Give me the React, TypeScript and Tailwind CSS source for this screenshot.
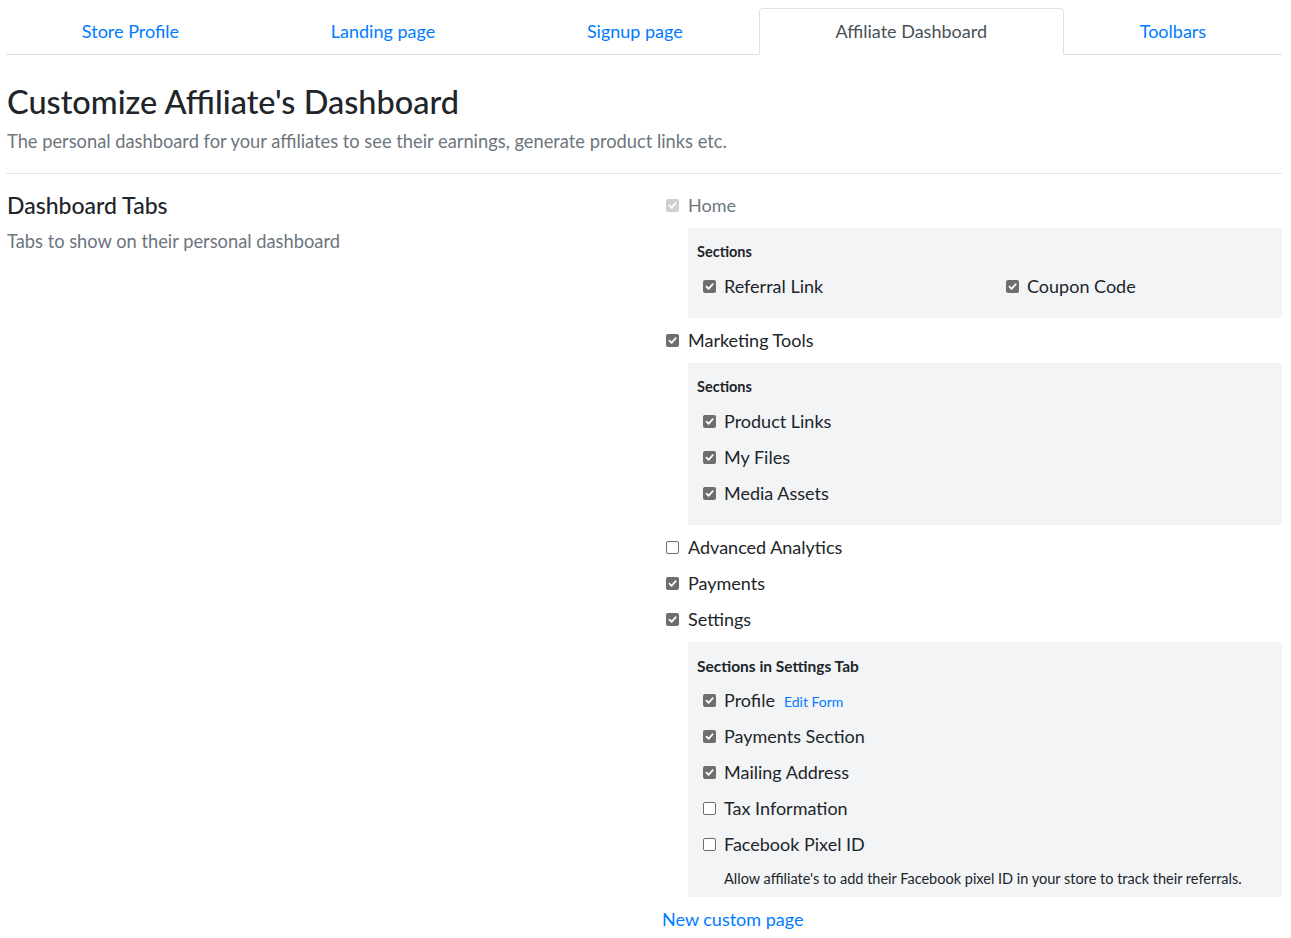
import React from "react";

const font = { fontFamily: "Lato, 'Noto Sans', sans-serif" };

function Box({ checked, disabled }: { checked: boolean; disabled?: boolean }) {
  if (checked) {
    return (
      <span
        className={`inline-flex h-[13px] w-[13px] shrink-0 items-center justify-center rounded-[2px] ${
          disabled ? "bg-[#d0d0d0]" : "bg-[#6e6e6e]"
        }`}
      >
        <svg width="9" height="9" viewBox="0 0 10 10" fill="none">
          <path d="M1.6 5.2 L4 7.6 L8.6 2.4" stroke="white" strokeWidth="1.9" strokeLinecap="round" strokeLinejoin="round" />
        </svg>
      </span>
    );
  }
  return <span className="inline-block h-[13px] w-[13px] shrink-0 rounded-[2px] border border-[#6e6e6e] bg-white" />;
}

function Check({
  label,
  checked,
  disabled,
  extra,
  gap = "gap-[9px]",
}: {
  label: string;
  checked: boolean;
  disabled?: boolean;
  extra?: React.ReactNode;
  gap?: string;
}) {
  return (
    <div className={`flex h-[36px] items-center ${gap}`}>
      <Box checked={checked} disabled={disabled} />
      <span className={`text-[18px] ${disabled ? "text-[#6c757d]" : "text-[#212529]"}`}>{label}</span>
      {extra}
    </div>
  );
}

function Panel({
  title,
  children,
  pb = "pb-[14px]",
  titleSize = "text-[14.5px]",
}: {
  title: string;
  children: React.ReactNode;
  pb?: string;
  titleSize?: string;
}) {
  return (
    <div className={`ml-[22px] mt-[5px] mb-[4px] bg-[#f3f4f6] pl-[9px] pr-[9px] pt-[14px] ${pb}`}>
      <div className={`h-[20px] font-bold leading-[20px] text-[#212529] ${titleSize}`}>{title}</div>
      <div className="mt-[6px] pl-[6px]">{children}</div>
    </div>
  );
}

export default function App() {
  const tabs = ["Store Profile", "Landing page", "Signup page", "Affiliate Dashboard", "Toolbars"];
  return (
    <div style={font} className="min-h-[938px] bg-white text-[#212529]">
      <div className="ml-[6px] w-[1276px]">
        {/* Tabs */}
        <div className="flex pt-[8px] border-b border-[#dee2e6]">
          {tabs.map((t) =>
            t === "Affiliate Dashboard" ? (
              <div
                key={t}
                className="-mb-px flex h-[47px] flex-auto items-center justify-center rounded-t-[4px] border border-[#dee2e6] border-b-white bg-white text-[18px] text-[#495057]"
              >
                {t}
              </div>
            ) : (
              <div key={t} className="flex h-[46px] flex-auto items-center justify-center text-[18px] text-[#007bff]">
                {t}
              </div>
            )
          )}
        </div>

        {/* Header */}
        <div className="pl-[1px]">
          <h1 className="mt-[27px] text-[32.5px] font-medium leading-[40px] text-[#212529]">Customize Affiliate's Dashboard</h1>
          <p className="mt-[7px] text-[18.3px] leading-[24px] text-[#6c757d]">
            The personal dashboard for your affiliates to see their earnings, generate product links etc.
          </p>
        </div>
        <div className="mt-[20px] border-t border-[#e2e4e7]" />

        {/* Body */}
        <div className="grid grid-cols-[660px_616px] pt-[13px]">
          <div className="pl-[1px]">
            <h2 className="h-[36px] text-[23px] font-medium leading-[36px] text-[#212529]">Dashboard Tabs</h2>
            <p className="mt-[1px] text-[18.3px] leading-[34px] text-[#6c757d]">Tabs to show on their personal dashboard</p>
          </div>
          <div>
            <Check label="Home" checked disabled />
            <Panel title="Sections">
              <div className="grid grid-cols-[303px_1fr]">
                <Check label="Referral Link" checked gap="gap-[8px]" />
                <Check label="Coupon Code" checked gap="gap-[8px]" />
              </div>
            </Panel>
            <Check label="Marketing Tools" checked />
            <Panel title="Sections">
              <Check label="Product Links" checked gap="gap-[8px]" />
              <Check label="My Files" checked gap="gap-[8px]" />
              <Check label="Media Assets" checked gap="gap-[8px]" />
            </Panel>
            <Check label="Advanced Analytics" checked={false} />
            <Check label="Payments" checked />
            <Check label="Settings" checked />
            <Panel title="Sections in Settings Tab" pb="pb-[8px]" titleSize="text-[15.5px]">
              <Check
                label="Profile"
                checked
                gap="gap-[8px]"
                extra={<span className="ml-[1px] mt-[2px] text-[14px] text-[#007bff]">Edit Form</span>}
              />
              <Check label="Payments Section" checked gap="gap-[8px]" />
              <Check label="Mailing Address" checked gap="gap-[8px]" />
              <Check label="Tax Information" checked={false} gap="gap-[8px]" />
              <Check label="Facebook Pixel ID" checked={false} gap="gap-[8px]" />
              <div className="mt-[7px] pl-[21px] text-[14.5px] leading-[20px] text-[#212529]">
                Allow affiliate's to add their Facebook pixel ID in your store to track their referrals.
              </div>
            </Panel>
            <div className="-ml-[4px] flex h-[36px] items-center text-[18px] text-[#007bff]">New custom page</div>
          </div>
        </div>
      </div>
    </div>
  );
}
